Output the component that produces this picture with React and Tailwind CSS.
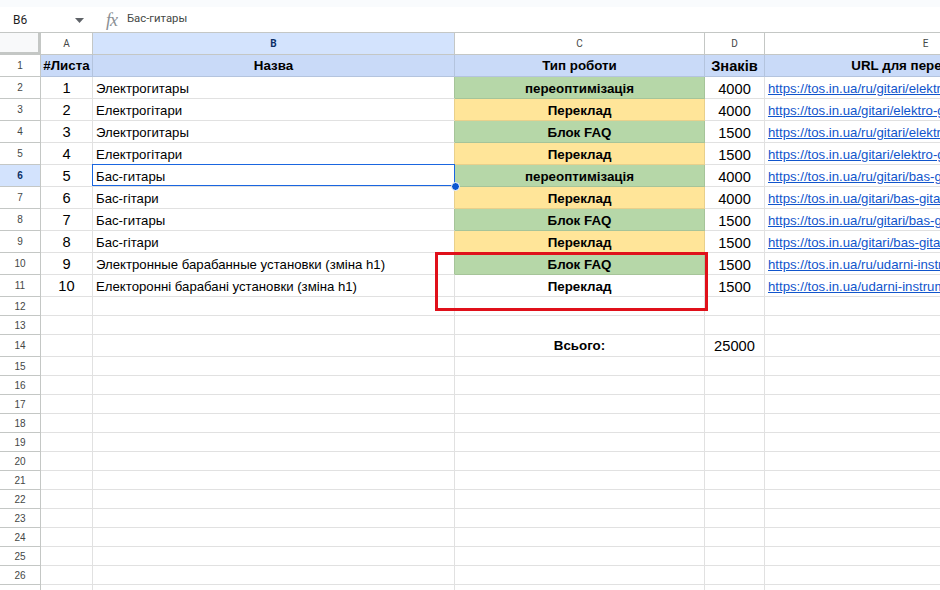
const green = { fill: 'bg-[#b6d7a8] border-[#a6c499]', edge: 'border-r-[#a6c499]' };
const yellow = { fill: 'bg-[#ffe599] border-[#e8d08c]', edge: 'border-r-[#e8d08c]' };
const plain = { fill: 'bg-white border-[#e1e1e1]', edge: 'border-r-[#e1e1e1]' };

const rows = [
  { n: 2, a: '1', b: 'Электрогитары', c: 'переоптимізація', tone: green, d: '4000', url: 'https://tos.in.ua/ru/gitari/elektro-gitary' },
  { n: 3, a: '2', b: 'Електрогітари', c: 'Переклад', tone: yellow, d: '4000', url: 'https://tos.in.ua/gitari/elektro-gitari' },
  { n: 4, a: '3', b: 'Электрогитары', c: 'Блок FAQ', tone: green, d: '1500', url: 'https://tos.in.ua/ru/gitari/elektro-gitary' },
  { n: 5, a: '4', b: 'Електрогітари', c: 'Переклад', tone: yellow, d: '1500', url: 'https://tos.in.ua/gitari/elektro-gitari' },
  { n: 6, a: '5', b: 'Бас-гитары', c: 'переоптимізація', tone: green, d: '4000', url: 'https://tos.in.ua/ru/gitari/bas-gitary' },
  { n: 7, a: '6', b: 'Бас-гітари', c: 'Переклад', tone: yellow, d: '4000', url: 'https://tos.in.ua/gitari/bas-gitari' },
  { n: 8, a: '7', b: 'Бас-гитары', c: 'Блок FAQ', tone: green, d: '1500', url: 'https://tos.in.ua/ru/gitari/bas-gitary' },
  { n: 9, a: '8', b: 'Бас-гітари', c: 'Переклад', tone: yellow, d: '1500', url: 'https://tos.in.ua/gitari/bas-gitari' },
  { n: 10, a: '9', b: 'Электронные барабанные установки (зміна h1)', c: 'Блок FAQ', tone: green, d: '1500', url: 'https://tos.in.ua/ru/udarni-instrumenty' },
  { n: 11, a: '10', b: 'Електоронні барабані установки (зміна h1)', c: 'Переклад', tone: plain, d: '1500', url: 'https://tos.in.ua/udarni-instrumenty' },
];

const columns = 'grid grid-cols-[41px_52px_362px_250px_60px_322px]';
const cell = 'flex items-center overflow-hidden whitespace-nowrap border-r border-b';

function RowHead({ n, active }) {
  return (
    <div
      className={`flex items-center justify-center border-r border-b border-r-[#c4c7c5] border-b-[#c4c7c5] text-[10px] ${
        active ? 'bg-[#d3e3fd] font-bold text-[#0b2f66]' : 'bg-white font-normal text-[#444746]'
      }`}
    >
      {n}
    </div>
  );
}

function EmptyRow({ n }) {
  return (
    <div className={`${columns} h-[19px]`}>
      <RowHead n={n} />
      <div className={`${cell} border-[#e1e1e1]`} />
      <div className={`${cell} border-[#e1e1e1]`} />
      <div className={`${cell} border-[#e1e1e1]`} />
      <div className={`${cell} border-[#e1e1e1]`} />
      <div className={`${cell} border-[#e1e1e1]`} />
    </div>
  );
}

export default function App() {
  const blank = [15, 16, 17, 18, 19, 20, 21, 22, 23, 24, 25, 26, 27];

  return (
    <div className="h-[590px] w-[940px] overflow-hidden bg-white font-['Liberation_Sans',Arial,sans-serif] text-black">
      {/* top strip + formula bar */}
      <div className="h-[7px] bg-[#f9fbfd]" />
      <div className="flex h-[25px] items-center text-[11.3px] text-[#444746]">
        <span className="ml-[13px] w-[62px] font-['Roboto',sans-serif] text-[12px] text-[#1f1f1f]">B6</span>
        <svg width="9" height="5" viewBox="0 0 9 5" className="mt-px">
          <path d="M0 0h9L4.500 5z" fill="#5f6368" />
        </svg>
        <span className="ml-[22px] w-[21px] font-['Liberation_Serif',serif] text-[18px] italic leading-none tracking-[-1px] text-[#8a8f94]">fx</span>
        <span className="font-['Roboto',sans-serif] text-[#444746]">Бас-гитары</span>
      </div>

      <div className="relative">
        {/* column letters */}
        <div className={`${columns} h-[23px] border-t border-[#c4c7c5] font-['Roboto',sans-serif] text-[10px] text-[#444746]`}>
          <div className="border-r-[3px] border-b-[3px] border-[#c4c7c5] bg-[#f8f9fa]" />
          {['A', 'B', 'C', 'D', 'E'].map((l) => (
            <div
              key={l}
              className={`flex items-center justify-center border-r border-b border-[#c4c7c5] ${
                l === 'B' ? 'bg-[#d3e3fd] font-bold text-[#0b2f66]' : 'bg-white'
              }`}
            >
              {l}
            </div>
          ))}
        </div>

        {/* header row */}
        <div className={`${columns} h-[22px] text-[13.33px] font-bold`}>
          <RowHead n={1} />
          <div className={`${cell} justify-center border-[#b4c4de] bg-[#c9daf8]`}>#Листа</div>
          <div className={`${cell} justify-center border-[#b4c4de] bg-[#c9daf8]`}>Назва</div>
          <div className={`${cell} justify-center border-[#b4c4de] bg-[#c9daf8]`}>Тип роботи</div>
          <div className={`${cell} justify-center border-[#b4c4de] bg-[#c9daf8] text-[14.67px]`}>Знаків</div>
          <div className={`${cell} justify-center border-[#b4c4de] bg-[#c9daf8]`}>URL для перекладу ua</div>
        </div>

        {rows.map((r) => (
          <div key={r.n} className={`${columns} h-[22px]`}>
            <RowHead n={r.n} active={r.n === 6} />
            <div className={`${cell} justify-center border-[#e1e1e1] text-[14.67px]`}>{r.a}</div>
            <div className={`${cell} border-[#e1e1e1] pl-[3px] pt-[2px] text-[13.2px] ${r.tone.edge}`}>{r.b}</div>
            <div className={`${cell} justify-center pt-[2px] text-[13.33px] font-bold ${r.tone.fill}`}>{r.c}</div>
            <div className={`${cell} justify-center border-[#e1e1e1] pt-[2px] text-[14.67px]`}>{r.d}</div>
            <div className={`${cell} border-[#e1e1e1] pl-[3px] pt-[2px] text-[13.2px] text-[#1155cc] underline`}>{r.url}</div>
          </div>
        ))}

        <EmptyRow n={12} />
        <EmptyRow n={13} />

        <div className={`${columns} h-[22px]`}>
          <RowHead n={14} />
          <div className={`${cell} border-[#e1e1e1]`} />
          <div className={`${cell} border-[#e1e1e1]`} />
          <div className={`${cell} justify-center border-[#e1e1e1] text-[13.33px] font-bold`}>Всього:</div>
          <div className={`${cell} justify-center border-[#e1e1e1] text-[14.67px]`}>25000</div>
          <div className={`${cell} border-[#e1e1e1]`} />
        </div>

        {blank.map((n) => (
          <EmptyRow key={n} n={n} />
        ))}

        {/* selected cell B6 */}
        <div className="absolute left-[92px] top-[132px] h-[22px] w-[363px] border border-[#1a66e0]" />
        <div className="absolute left-[451px] top-[150px] h-[9px] w-[9px] rounded-full border border-white bg-[#0b57d0]" />

        {/* red annotation box */}
        <div className="absolute left-[435px] top-[220px] h-[59px] w-[273px] border-[3px] border-[#e0101a]" />
      </div>
    </div>
  );
}
